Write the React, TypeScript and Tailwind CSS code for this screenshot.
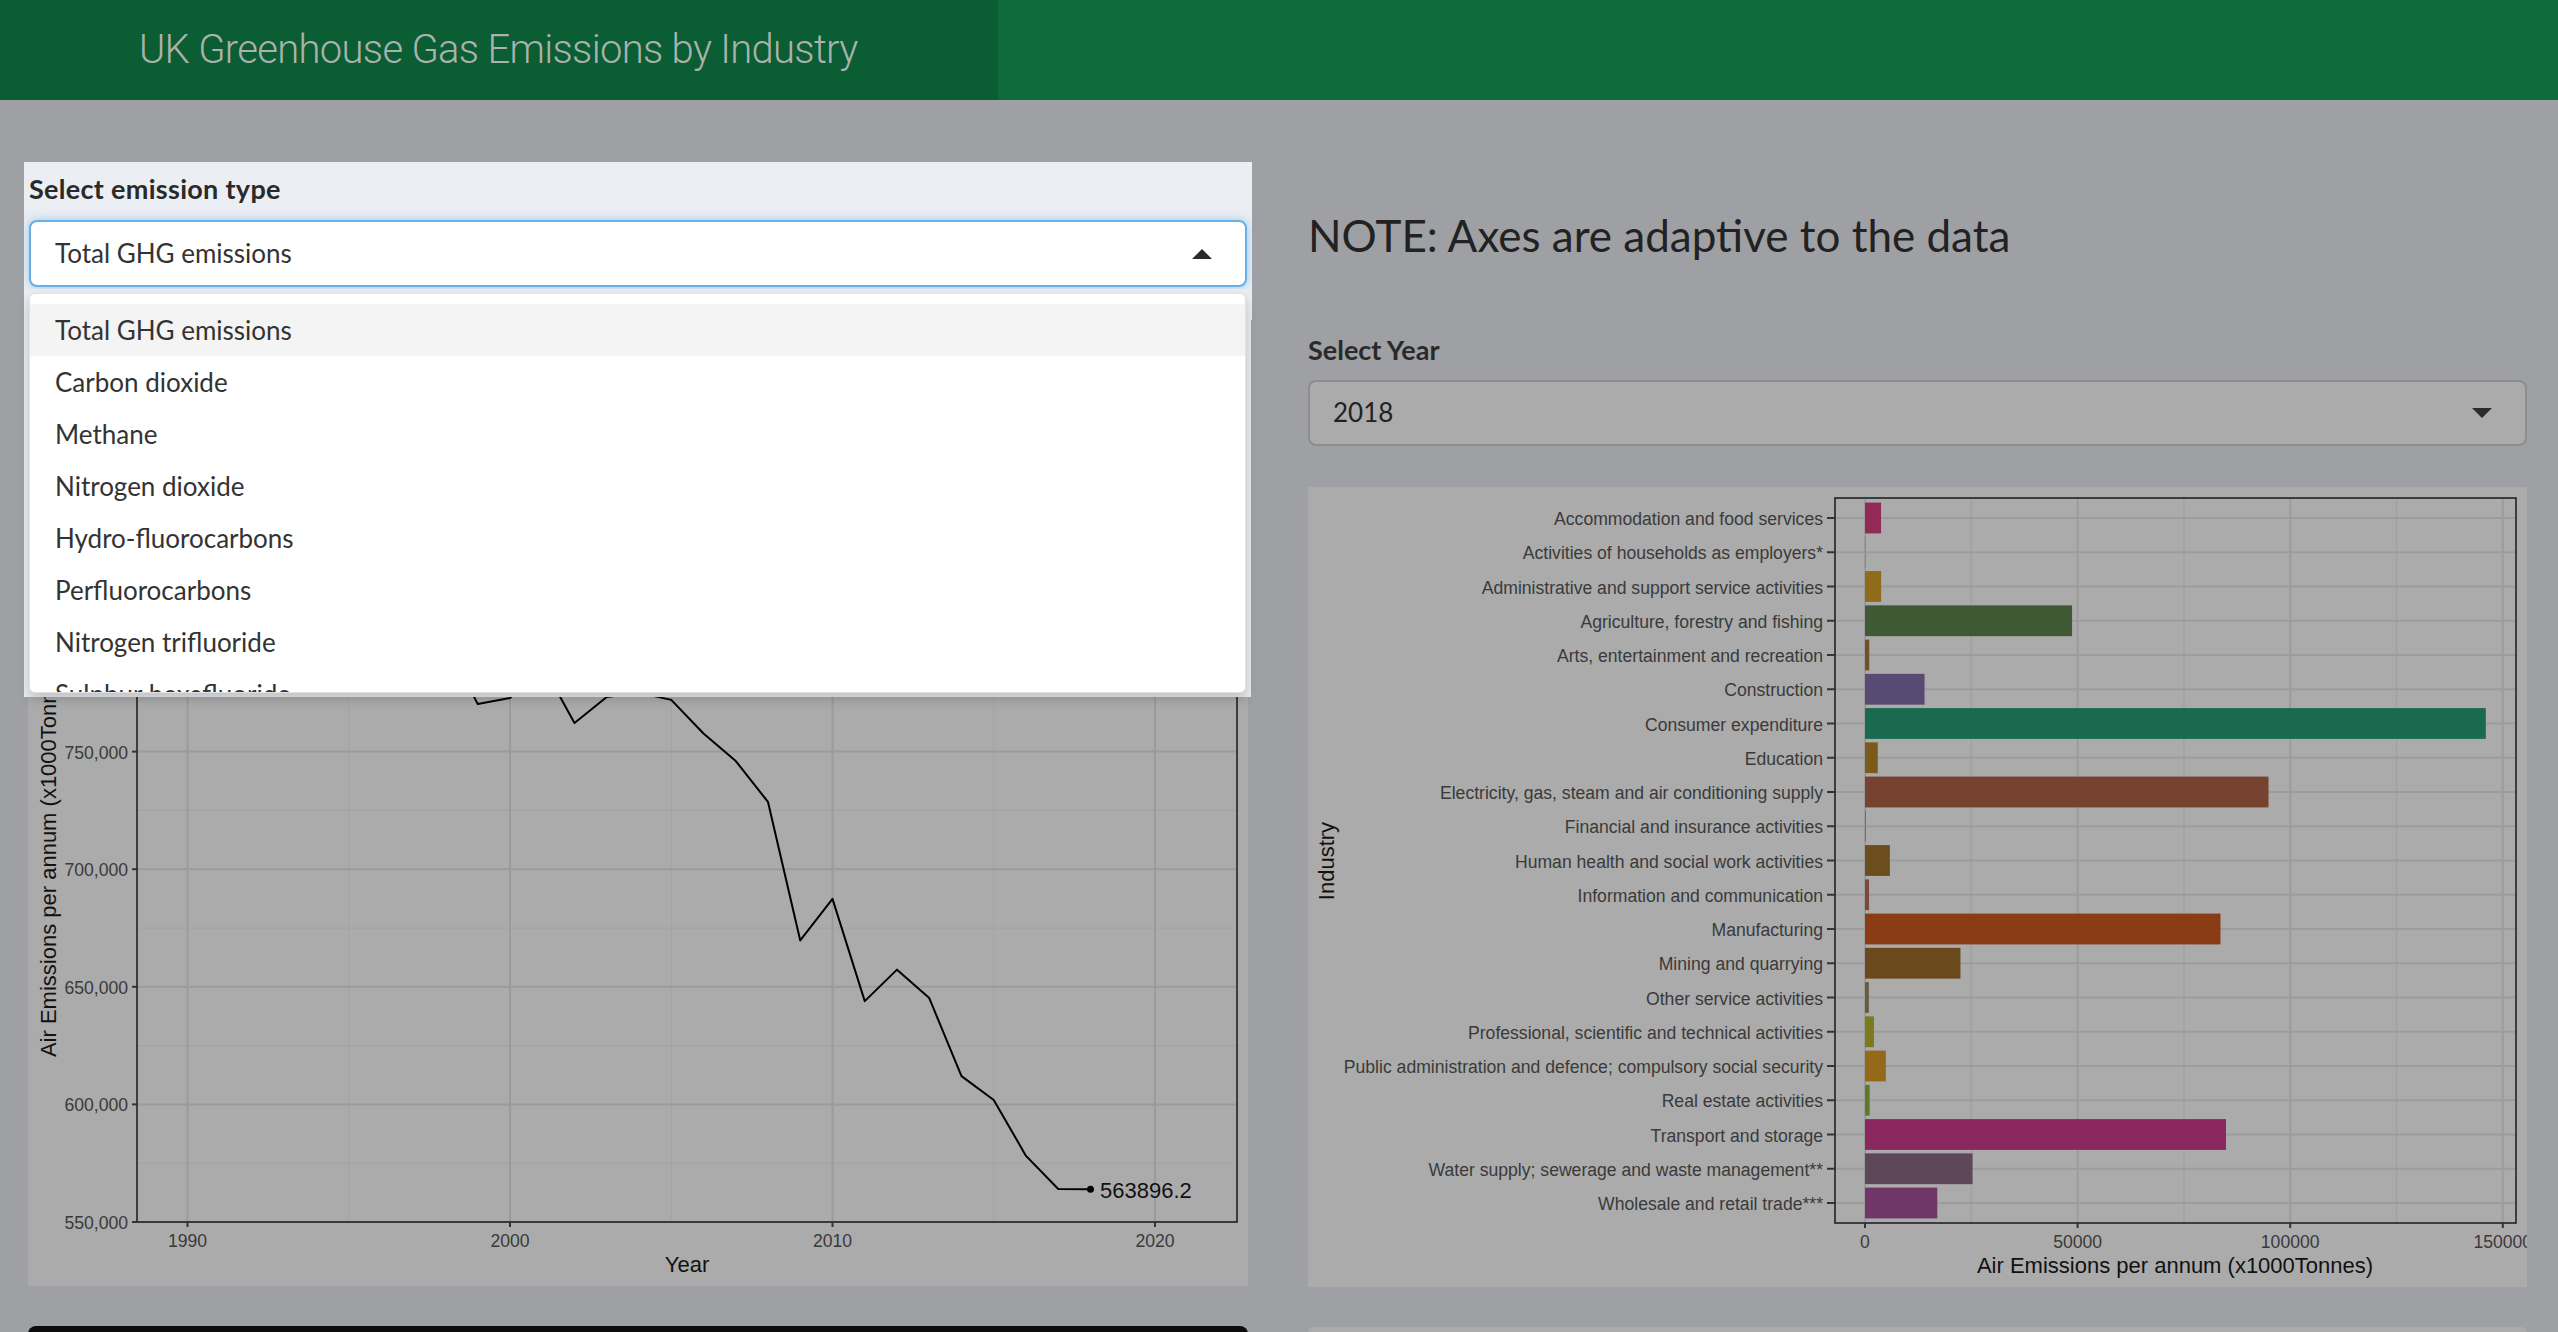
import React from "react";

const emissionTypes = [
  "Total GHG emissions",
  "Carbon dioxide",
  "Methane",
  "Nitrogen dioxide",
  "Hydro-fluorocarbons",
  "Perfluorocarbons",
  "Nitrogen trifluoride",
  "Sulphur hexafluoride",
];

// yearly totals, x1000 tonnes
const totals: [number, number][] = [
  [1990, 840000], [1991, 846000], [1992, 822000], [1993, 806000], [1994, 801000],
  [1995, 795000], [1996, 815000], [1997, 790000], [1998, 797000], [1999, 770200],
  [2000, 772800], [2001, 787000], [2002, 762200], [2003, 773200], [2004, 775000],
  [2005, 772000], [2006, 757700], [2007, 746000], [2008, 728600], [2009, 669700],
  [2010, 687400], [2011, 643900], [2012, 657300], [2013, 645200], [2014, 612000],
  [2015, 601900], [2016, 578100], [2017, 564000], [2018, 563896.2],
];

const industries: { name: string; value: number; color: string }[] = [
  { name: "Accommodation and food services", value: 3770, color: "#932a55" },
  { name: "Activities of households as employers*", value: 130, color: "#8a7f80" },
  { name: "Administrative and support service activities", value: 3800, color: "#8e6c1a" },
  { name: "Agriculture, forestry and fishing", value: 48700, color: "#3e5934" },
  { name: "Arts, entertainment and recreation", value: 1000, color: "#6f5227" },
  { name: "Construction", value: 14000, color: "#574a73" },
  { name: "Consumer expenditure", value: 146000, color: "#1a6a50" },
  { name: "Education", value: 3000, color: "#7b5a1c" },
  { name: "Electricity, gas, steam and air conditioning supply", value: 94900, color: "#764330" },
  { name: "Financial and insurance activities", value: 150, color: "#6f6a1c" },
  { name: "Human health and social work activities", value: 5850, color: "#6c4d1c" },
  { name: "Information and communication", value: 950, color: "#7c4a3a" },
  { name: "Manufacturing", value: 83600, color: "#8a3d15" },
  { name: "Mining and quarrying", value: 22450, color: "#6a4a1c" },
  { name: "Other service activities", value: 900, color: "#6a5a42" },
  { name: "Professional, scientific and technical activities", value: 2100, color: "#7b7a1e" },
  { name: "Public administration and defence; compulsory social security", value: 4900, color: "#94691a" },
  { name: "Real estate activities", value: 1100, color: "#5e7a28" },
  { name: "Transport and storage", value: 84900, color: "#8a275e" },
  { name: "Water supply; sewerage and waste management**", value: 25300, color: "#5e4758" },
  { name: "Wholesale and retail trade***", value: 17000, color: "#713668" },
];

const chartFont = { fontFamily: "'Liberation Sans', Arial, sans-serif" };

const LineChart = () => {
  const px = (yr: number) => 510 + (yr - 2000) * 32.25;
  const py = (v: number) => 1222 - ((v - 550000) * 117.6) / 50000;
  const majorY = [550000, 600000, 650000, 700000, 750000, 800000, 850000];
  const minorY = [575000, 625000, 675000, 725000, 775000, 825000];
  const path = totals.map(([yr, v], i) => `${i ? "L" : "M"}${px(yr)},${py(v)}`).join(" ");
  const last = totals[totals.length - 1];

  return (
    <svg width={1220} height={816} className="block" style={chartFont}>
      <g transform="translate(-28,-470)">
        <rect x={28} y={470} width={1220} height={816} fill="#ababab" />
        {minorY.map((v) => (
          <line key={v} x1={137} x2={1237} y1={py(v)} y2={py(v)} stroke="#a2a2a2" strokeWidth={1} />
        ))}
        {[1995, 2005, 2015].map((yr) => (
          <line key={yr} x1={px(yr)} x2={px(yr)} y1={496} y2={1222} stroke="#a2a2a2" strokeWidth={1} />
        ))}
        {majorY.map((v) => (
          <line key={v} x1={137} x2={1237} y1={py(v)} y2={py(v)} stroke="#9b9b9b" strokeWidth={2} />
        ))}
        {[1990, 2000, 2010, 2020].map((yr) => (
          <line key={yr} x1={px(yr)} x2={px(yr)} y1={496} y2={1222} stroke="#9b9b9b" strokeWidth={2} />
        ))}
        <rect x={137} y={496} width={1100} height={726} fill="none" stroke="#1a1a1a" strokeWidth={1.5} />
        <path d={path} fill="none" stroke="#000" strokeWidth={2} strokeLinejoin="round" />
        <circle cx={px(last[0])} cy={py(last[1])} r={3.5} fill="#000" />
        <text x={1100} y={py(last[1]) + 1} fontSize={22} dominantBaseline="central" fill="#111">
          563896.2
        </text>
        {majorY.map((v) => (
          <g key={v}>
            <line x1={132} x2={137} y1={py(v)} y2={py(v)} stroke="#333" strokeWidth={2} />
            <text x={128} y={py(v) + 1} fontSize={17.6} textAnchor="end" dominantBaseline="central" fill="#3a3a3a">
              {v.toLocaleString("en-US")}
            </text>
          </g>
        ))}
        {[1990, 2000, 2010, 2020].map((yr) => (
          <g key={yr}>
            <line x1={px(yr)} x2={px(yr)} y1={1222} y2={1227} stroke="#333" strokeWidth={2} />
            <text x={px(yr)} y={1241} fontSize={17.6} textAnchor="middle" dominantBaseline="central" fill="#3a3a3a">
              {yr}
            </text>
          </g>
        ))}
        <text x={687} y={1264} fontSize={22} textAnchor="middle" dominantBaseline="central" fill="#111">
          Year
        </text>
        <text
          x={48}
          y={859}
          fontSize={22}
          textAnchor="middle"
          dominantBaseline="central"
          fill="#111"
          transform="rotate(-90 48 859)"
        >
          Air Emissions per annum (x1000Tonnes)
        </text>
      </g>
    </svg>
  );
};

const BarChart = () => {
  const bx = (v: number) => 1865 + v * 0.004252;
  const cy = (i: number) => 517 + i * 34.25;

  return (
    <svg width={1219} height={800} className="block" style={chartFont}>
      <g transform="translate(-1308,-486)">
        <rect x={1308} y={486} width={1219} height={800} fill="#ababab" />
        {[25000, 75000, 125000].map((v) => (
          <line key={v} x1={bx(v)} x2={bx(v)} y1={497} y2={1222} stroke="#a1a1a1" strokeWidth={1.5} />
        ))}
        {[0, 50000, 100000, 150000].map((v) => (
          <line key={v} x1={bx(v)} x2={bx(v)} y1={497} y2={1222} stroke="#9c9c9c" strokeWidth={2} />
        ))}
        {industries.map((d, i) => (
          <line key={d.name} x1={1835} x2={2516} y1={cy(i)} y2={cy(i)} stroke="#9c9c9c" strokeWidth={2} />
        ))}
        {industries.map((d, i) => (
          <rect key={d.name} x={1865} y={cy(i) - 15.4} width={Math.max(d.value * 0.004252, 0.8)} height={30.8} fill={d.color} />
        ))}
        <rect x={1835} y={497} width={681} height={725} fill="none" stroke="#1a1a1a" strokeWidth={1.5} />
        {industries.map((d, i) => (
          <g key={d.name}>
            <line x1={1827} x2={1835} y1={cy(i)} y2={cy(i)} stroke="#333" strokeWidth={2} />
            <text x={1823} y={cy(i) + 1} fontSize={17.6} textAnchor="end" dominantBaseline="central" fill="#3a3a3a">
              {d.name}
            </text>
          </g>
        ))}
        {[0, 50000, 100000, 150000].map((v) => (
          <g key={v}>
            <line x1={bx(v)} x2={bx(v)} y1={1222} y2={1227} stroke="#333" strokeWidth={2} />
            <text x={bx(v)} y={1241} fontSize={17.6} textAnchor="middle" dominantBaseline="central" fill="#3a3a3a">
              {v}
            </text>
          </g>
        ))}
        <text x={2175} y={1264} fontSize={22} textAnchor="middle" dominantBaseline="central" fill="#111">
          Air Emissions per annum (x1000Tonnes)
        </text>
        <text
          x={1326}
          y={860}
          fontSize={22}
          textAnchor="middle"
          dominantBaseline="central"
          fill="#111"
          transform="rotate(-90 1326 860)"
        >
          Industry
        </text>
      </g>
    </svg>
  );
};

const Caret = ({ up }: { up?: boolean }) => (
  <svg width={20} height={10} viewBox="0 0 20 10" className="block">
    <path d={up ? "M0 10 L10 0 L20 10 Z" : "M0 0 L10 10 L20 0 Z"} fill="#2b2b2b" />
  </svg>
);

const App = () => {
  return (
    <div
      className="h-[1332px] w-[2558px] overflow-hidden bg-[#9fa0a4] text-[#2a2a2a]"
      style={{ fontFamily: "Lato, 'Open Sans', sans-serif" }}
    >
      <header className="flex h-[100px] bg-[#0f6b3c]">
        <div className="flex w-[998px] items-center bg-[#0b5d34] pl-[139px]">
          <h1
            className="text-[40px] leading-[48px] font-light tracking-[-0.7px] text-[#aab2ac]"
            style={{ fontFamily: "Roboto, 'Liberation Sans', sans-serif" }}
          >
            UK Greenhouse Gas Emissions by Industry
          </h1>
        </div>
      </header>

      <main className="flex gap-[60px] pl-[28px] pt-[62px]">
        <section className="relative w-[1220px] shrink-0">
          <div className="-mx-[4px] bg-[#ebeef2] px-[5px] pt-[13px] pb-[33px]">
            <div className="text-[27px] leading-[28px] font-bold tracking-[0.3px] text-[#2a2a2a]">
              Select emission type
            </div>
            <div className="mt-[17px] flex h-[67px] items-center justify-between rounded-[8px] border-2 border-[#66afe9] bg-white pl-[24px] pr-[33px] shadow-[0_0_10px_rgba(102,175,233,0.6)]">
              <span className="text-[26px] text-[#333]">Total GHG emissions</span>
              <Caret up />
            </div>
          </div>

          <div className="mt-[150px]">
            <LineChart />
          </div>

          <div className="mt-[40px] h-[60px] rounded-t-[8px] bg-[#0c0c0c]" />

          <div className="absolute left-[-4px] top-[127px] w-[1227px] bg-[#e9ecf0] px-[5px] py-[4px]">
            <div className="h-[400px] overflow-hidden rounded-[6px] border border-[#e2e2e2] bg-white pt-[10px] shadow-[0_6px_12px_rgba(0,0,0,0.18)]">
              {emissionTypes.map((t, i) => (
                <div
                  key={t}
                  className={`flex h-[52px] items-center pl-[25px] text-[26px] text-[#333] ${i === 0 ? "bg-[#f4f4f4]" : ""}`}
                >
                  {t}
                </div>
              ))}
            </div>
          </div>
        </section>

        <section className="w-[1219px] shrink-0">
          <h2 className="mt-[47px] text-[44px] leading-[1.2] font-normal text-[#222]">
            NOTE: Axes are adaptive to the data
          </h2>
          <div className="mt-[74px] text-[27px] leading-[28px] font-bold text-[#2a2a2a]">Select Year</div>
          <div className="mt-[16px] flex h-[66px] items-center justify-between rounded-[8px] border-2 border-[#8d8d8d] bg-[#ababab] pl-[23px] pr-[33px]">
            <span className="text-[26px] text-[#222]">2018</span>
            <Caret />
          </div>
          <div className="mt-[41px]">
            <BarChart />
          </div>
          <div className="mt-[40px] h-[60px] rounded-t-[6px] bg-[#ababab]" />
        </section>
      </main>
    </div>
  );
};

export default App;
